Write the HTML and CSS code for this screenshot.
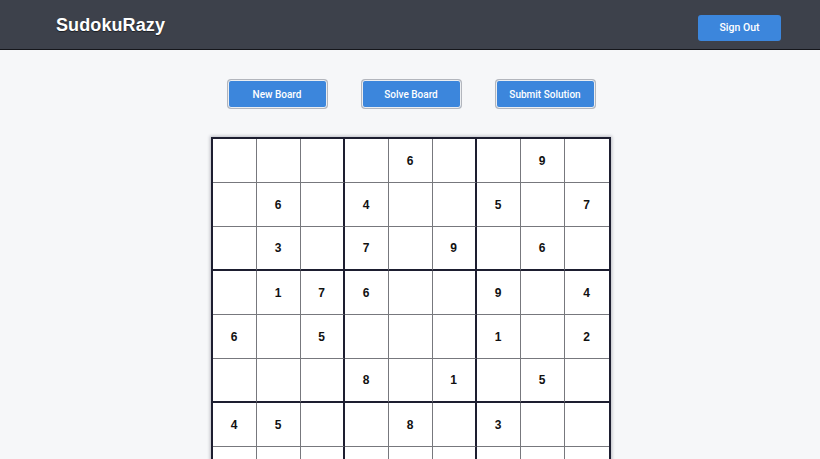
FILE: index.html
```html
<!DOCTYPE html>
<html lang="en">
<head>
<meta charset="utf-8">
<title>SudokuRazy</title>
<link rel="stylesheet" href="styles.css">
</head>
<body>
<header class="topbar">
  <h1 class="brand">SudokuRazy</h1>
  <button class="btn btn-signout">Sign Out</button>
</header>
<main class="main">
  <div class="actions">
    <button class="btn btn-action">New Board</button>
    <button class="btn btn-action">Solve Board</button>
    <button class="btn btn-action">Submit Solution</button>
  </div>
  <div class="board">
    <div class="cell"></div><div class="cell"></div><div class="cell"></div><div class="cell"></div><div class="cell">6</div><div class="cell"></div><div class="cell"></div><div class="cell">9</div><div class="cell"></div>
    <div class="cell"></div><div class="cell">6</div><div class="cell"></div><div class="cell">4</div><div class="cell"></div><div class="cell"></div><div class="cell">5</div><div class="cell"></div><div class="cell">7</div>
    <div class="cell"></div><div class="cell">3</div><div class="cell"></div><div class="cell">7</div><div class="cell"></div><div class="cell">9</div><div class="cell"></div><div class="cell">6</div><div class="cell"></div>
    <div class="cell"></div><div class="cell">1</div><div class="cell">7</div><div class="cell">6</div><div class="cell"></div><div class="cell"></div><div class="cell">9</div><div class="cell"></div><div class="cell">4</div>
    <div class="cell">6</div><div class="cell"></div><div class="cell">5</div><div class="cell"></div><div class="cell"></div><div class="cell"></div><div class="cell">1</div><div class="cell"></div><div class="cell">2</div>
    <div class="cell"></div><div class="cell"></div><div class="cell"></div><div class="cell">8</div><div class="cell"></div><div class="cell">1</div><div class="cell"></div><div class="cell">5</div><div class="cell"></div>
    <div class="cell">4</div><div class="cell">5</div><div class="cell"></div><div class="cell"></div><div class="cell">8</div><div class="cell"></div><div class="cell">3</div><div class="cell"></div><div class="cell"></div>
    <div class="cell"></div><div class="cell"></div><div class="cell"></div><div class="cell"></div><div class="cell"></div><div class="cell"></div><div class="cell"></div><div class="cell"></div><div class="cell"></div>
    <div class="cell"></div><div class="cell"></div><div class="cell"></div><div class="cell"></div><div class="cell"></div><div class="cell"></div><div class="cell"></div><div class="cell"></div><div class="cell"></div>
  </div>
</main>
</body>
</html>
```

FILE: styles.css
```css
html {
  scrollbar-width: none;
}
html::-webkit-scrollbar {
  display: none;
}
body {
  margin: 0;
  background: #f6f7f9;
  font-family: "Liberation Sans", Arial, sans-serif;
  color: #111;
}
.topbar {
  height: 49px;
  background: #3d414b;
  border-bottom: 1px solid #15161b;
  display: flex;
  align-items: center;
  justify-content: space-between;
  padding: 0 40px 0 56px;
}
.brand {
  margin: 0;
  font-size: 18px;
  font-weight: 700;
  color: #ffffff;
  letter-spacing: 0.1px;
  text-shadow: 0 1px 1px rgba(0, 0, 0, 0.55);
  position: relative;
  top: 1px;
}
.btn {
  font-family: Roboto, "Liberation Sans", Arial, sans-serif;
  font-weight: 500;
  color: #ffffff;
  background: #3c86dc;
  cursor: pointer;
  font-size: 10px;
  padding: 0;
}
.btn-signout {
  width: 83px;
  height: 26px;
  border: none;
  border-radius: 3px;
  font-size: 10.5px;
  position: relative;
  top: 3px;
  left: 1px;
}
.main {
  display: flex;
  flex-direction: column;
  align-items: center;
  padding-top: 30px;
}
.actions {
  display: flex;
  gap: 35px;
  padding-left: 2px;
}
.btn-action {
  width: 99px;
  height: 28px;
  border: 1px solid #eceef1;
  border-radius: 3px;
  box-shadow: 0 0 0 1px #b3b6bd;
}
.board {
  margin-top: 29px;
  display: grid;
  grid-template-columns: repeat(9, 44px);
  grid-auto-rows: 44px;
  border: 2px solid #1d1e30;
  background: #ffffff;
  box-shadow: 0 0 3px 1px rgba(40, 44, 60, 0.28);
  margin-left: 1px;
}
.cell {
  border-right: 1px solid #77787d;
  border-bottom: 1px solid #77787d;
  display: flex;
  align-items: center;
  justify-content: center;
  font-size: 12px;
  font-weight: 700;
  color: #111;
}
.cell:nth-child(9n+3),
.cell:nth-child(9n+6) {
  border-right: 2px solid #1d1e30;
}
.cell:nth-child(9n) {
  border-right: none;
}
.cell:nth-child(n+19):nth-child(-n+27),
.cell:nth-child(n+46):nth-child(-n+54) {
  border-bottom: 2px solid #1d1e30;
}
.cell:nth-child(n+73) {
  border-bottom: none;
}
```
